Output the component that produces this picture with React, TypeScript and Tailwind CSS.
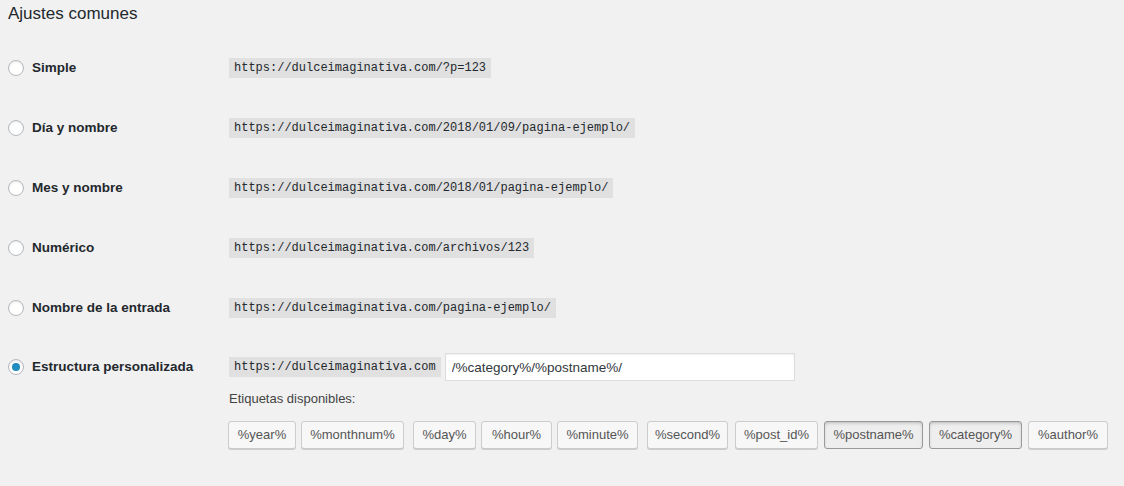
import { useState } from 'react';

const OPTIONS = [
  { id: 'plain', label: 'Simple', example: 'https://dulceimaginativa.com/?p=123' },
  { id: 'day', label: 'Día y nombre', example: 'https://dulceimaginativa.com/2018/01/09/pagina-ejemplo/' },
  { id: 'month', label: 'Mes y nombre', example: 'https://dulceimaginativa.com/2018/01/pagina-ejemplo/' },
  { id: 'numeric', label: 'Numérico', example: 'https://dulceimaginativa.com/archivos/123' },
  { id: 'post', label: 'Nombre de la entrada', example: 'https://dulceimaginativa.com/pagina-ejemplo/' },
];

const TAGS = [
  { tag: '%year%', cls: 'w-[68px] -ml-[1px]' },
  { tag: '%monthnum%', cls: 'w-[103px] ml-[5px]' },
  { tag: '%day%', cls: 'w-[63px] ml-[9px]' },
  { tag: '%hour%', cls: 'w-[71px] ml-[5px]' },
  { tag: '%minute%', cls: 'w-[81px] ml-[5px]' },
  { tag: '%second%', cls: 'w-[81px] ml-[9px]' },
  { tag: '%post_id%', cls: 'w-[83px] ml-[7px]' },
  { tag: '%postname%', cls: 'w-[99px] ml-[6px]' },
  { tag: '%category%', cls: 'w-[93px] ml-[6px]' },
  { tag: '%author%', cls: 'w-[80px] ml-[6px]' },
];

const Radio = ({ checked }: { checked: boolean }) => (
  <span className="w-4 h-4 rounded-full border border-[#b4b9be] bg-white shadow-[inset_0_1px_2px_rgba(0,0,0,0.1)] flex items-center justify-center shrink-0">
    {checked && <span className="w-2 h-2 rounded-full bg-[#1e8cbe]" />}
  </span>
);

const Code = ({ children }: { children: string }) => (
  <code className="bg-[rgba(0,0,0,0.07)] h-5 px-[5px] flex items-center text-[12px] text-[#23282d] font-['Liberation_Mono',monospace] whitespace-pre">
    {children}
  </code>
);

export default function App() {
  const [selected, setSelected] = useState('custom');
  const [structure, setStructure] = useState('/%category%/%postname%/');

  const hasTag = (t: string) => structure.includes(t);

  return (
    <div className="min-h-screen bg-[#f1f1f1] text-[#23282d] font-['Liberation_Sans',sans-serif] pl-2">
      <h2 className="text-[17px] leading-[26px] pt-[1px] h-[38px]">Ajustes comunes</h2>

      {OPTIONS.map((o) => (
        <div key={o.id} className="h-[60px] flex items-center cursor-pointer" onClick={() => setSelected(o.id)}>
          <div className="w-[221px] flex items-center gap-2 shrink-0">
            <Radio checked={selected === o.id} />
            <span className="text-[13.5px] font-semibold pt-[1px]">{o.label}</span>
          </div>
          <Code>{o.example}</Code>
        </div>
      ))}

      {/* Custom structure */}
      <div className="pt-[15px] flex">
        <div className="w-[221px] h-7 flex items-center gap-2 shrink-0 cursor-pointer" onClick={() => setSelected('custom')}>
          <Radio checked={selected === 'custom'} />
          <span className="text-[13.5px] font-semibold pt-[1px]">Estructura personalizada</span>
        </div>
        <div>
          <div className="flex items-center gap-1 h-7">
            <Code>https://dulceimaginativa.com</Code>
            <input
              value={structure}
              onChange={(e) => setStructure(e.target.value)}
              className="w-[350px] h-7 bg-white border border-[#ddd] shadow-[inset_0_1px_2px_rgba(0,0,0,0.07)] px-[6px] text-[13.5px] text-[#32373c] outline-none"
            />
          </div>
          <p className="mt-[8px] text-[13px] leading-5 text-[#444]">Etiquetas disponibles:</p>
          <div className="mt-[12px] flex">
            {TAGS.map((t) => (
              <button
                key={t.tag}
                className={`${t.cls} h-7 rounded-[3px] border text-[13px] text-[#555] flex items-center justify-center ${
                  hasTag(t.tag)
                    ? 'bg-[#eee] border-[#999] shadow-[inset_0_2px_5px_-3px_rgba(0,0,0,0.5)]'
                    : 'bg-[#f7f7f7] border-[#ccc] shadow-[0_1px_0_#ccc]'
                }`}
              >
                {t.tag}
              </button>
            ))}
          </div>
        </div>
      </div>
    </div>
  );
}
